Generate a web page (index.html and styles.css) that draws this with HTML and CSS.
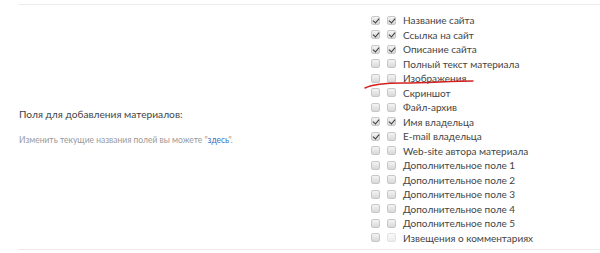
FILE: index.html
```html
<!DOCTYPE html>
<html lang="ru">
<head>
    <meta charset="UTF-8">
    <title>Поля для добавления материалов</title>
    <link rel="stylesheet" href="styles.css">
</head>
<body>
    <div class="settings">
        <div class="row">
            <div class="info">
                <div class="title">Поля для добавления материалов:</div>
                <div class="hint">Изменить текущие названия полей вы можете "<a href="#">здесь</a>".</div>
            </div>
            <ul class="fields">
                <li><span class="cb on"></span><span class="cb on"></span>Название сайта</li>
                <li><span class="cb on"></span><span class="cb on"></span>Ссылка на сайт</li>
                <li><span class="cb on"></span><span class="cb on"></span>Описание сайта</li>
                <li><span class="cb"></span><span class="cb"></span>Полный текст материала</li>
                <li class="marked"><span class="cb"></span><span class="cb"></span>Изображения
                    <!-- red underline drawn over the screenshot -->
                    <svg class="mark" width="120" height="14" viewBox="0 0 120 14">
                        <path d="M2 12 C 8 9, 18 7, 40 7 S 90 5, 110 5" fill="none" stroke="#d42020" stroke-width="1.4" stroke-linecap="round"/>
                    </svg>
                </li>
                <li><span class="cb"></span><span class="cb"></span>Скриншот</li>
                <li><span class="cb"></span><span class="cb"></span>Файл-архив</li>
                <li><span class="cb on"></span><span class="cb on"></span>Имя владельца</li>
                <li><span class="cb on"></span><span class="cb"></span>E-mail владельца</li>
                <li><span class="cb"></span><span class="cb"></span>Web-site автора материала</li>
                <li><span class="cb"></span><span class="cb"></span>Дополнительное поле 1</li>
                <li><span class="cb"></span><span class="cb"></span>Дополнительное поле 2</li>
                <li><span class="cb"></span><span class="cb"></span>Дополнительное поле 3</li>
                <li><span class="cb"></span><span class="cb"></span>Дополнительное поле 4</li>
                <li><span class="cb"></span><span class="cb"></span>Дополнительное поле 5</li>
                <li><span class="cb"></span><span class="cb off"></span>Извещения о комментариях</li>
            </ul>
        </div>
    </div>
</body>
</html>
```

FILE: styles.css
```css
* {
    margin: 0;
    padding: 0;
    box-sizing: border-box;
}

body {
    font-family: Lato, 'Open Sans', sans-serif;
    background: #fff;
    color: #444;
}

.settings {
    margin: 4px 0 0 18px;
    border-top: 1px solid #ececec;
    border-bottom: 1px solid #ececec;
    height: 246px;
}

.row {
    display: flex;
    align-items: center;
    padding-top: 8px;
}

.info {
    width: 353px;
    padding-left: 1px;
    padding-bottom: 6px;
}

.title {
    font-size: 10.2px;
    color: #444;
    margin-bottom: 15px;
}

.hint {
    font-size: 8.5px;
    color: #9a9a9a;
}

.hint a {
    color: #3b6fc2;
    text-decoration: none;
}

.fields {
    list-style: none;
}

.fields li {
    display: flex;
    align-items: center;
    height: 14.5px;
    font-size: 10px;
    color: #444;
    white-space: nowrap;
}

.fields li.marked {
    position: relative;
}

.cb {
    width: 9px;
    height: 9px;
    border: 1px solid #c8c8c8;
    border-radius: 2px;
    background: linear-gradient(#f4f4f4, #d8d8d8);
    margin-right: 7px;
    position: relative;
}

.cb.on::after {
    content: "";
    position: absolute;
    left: 2px;
    top: 0;
    width: 3px;
    height: 5px;
    border: solid #3a3a3a;
    border-width: 0 1.5px 1.5px 0;
    transform: rotate(40deg);
}

.cb.off {
    border-color: #e2e2e2;
    background: linear-gradient(#fafafa, #ececec);
}

.mark {
    position: absolute;
    left: -8px;
    top: 5px;
}
```
